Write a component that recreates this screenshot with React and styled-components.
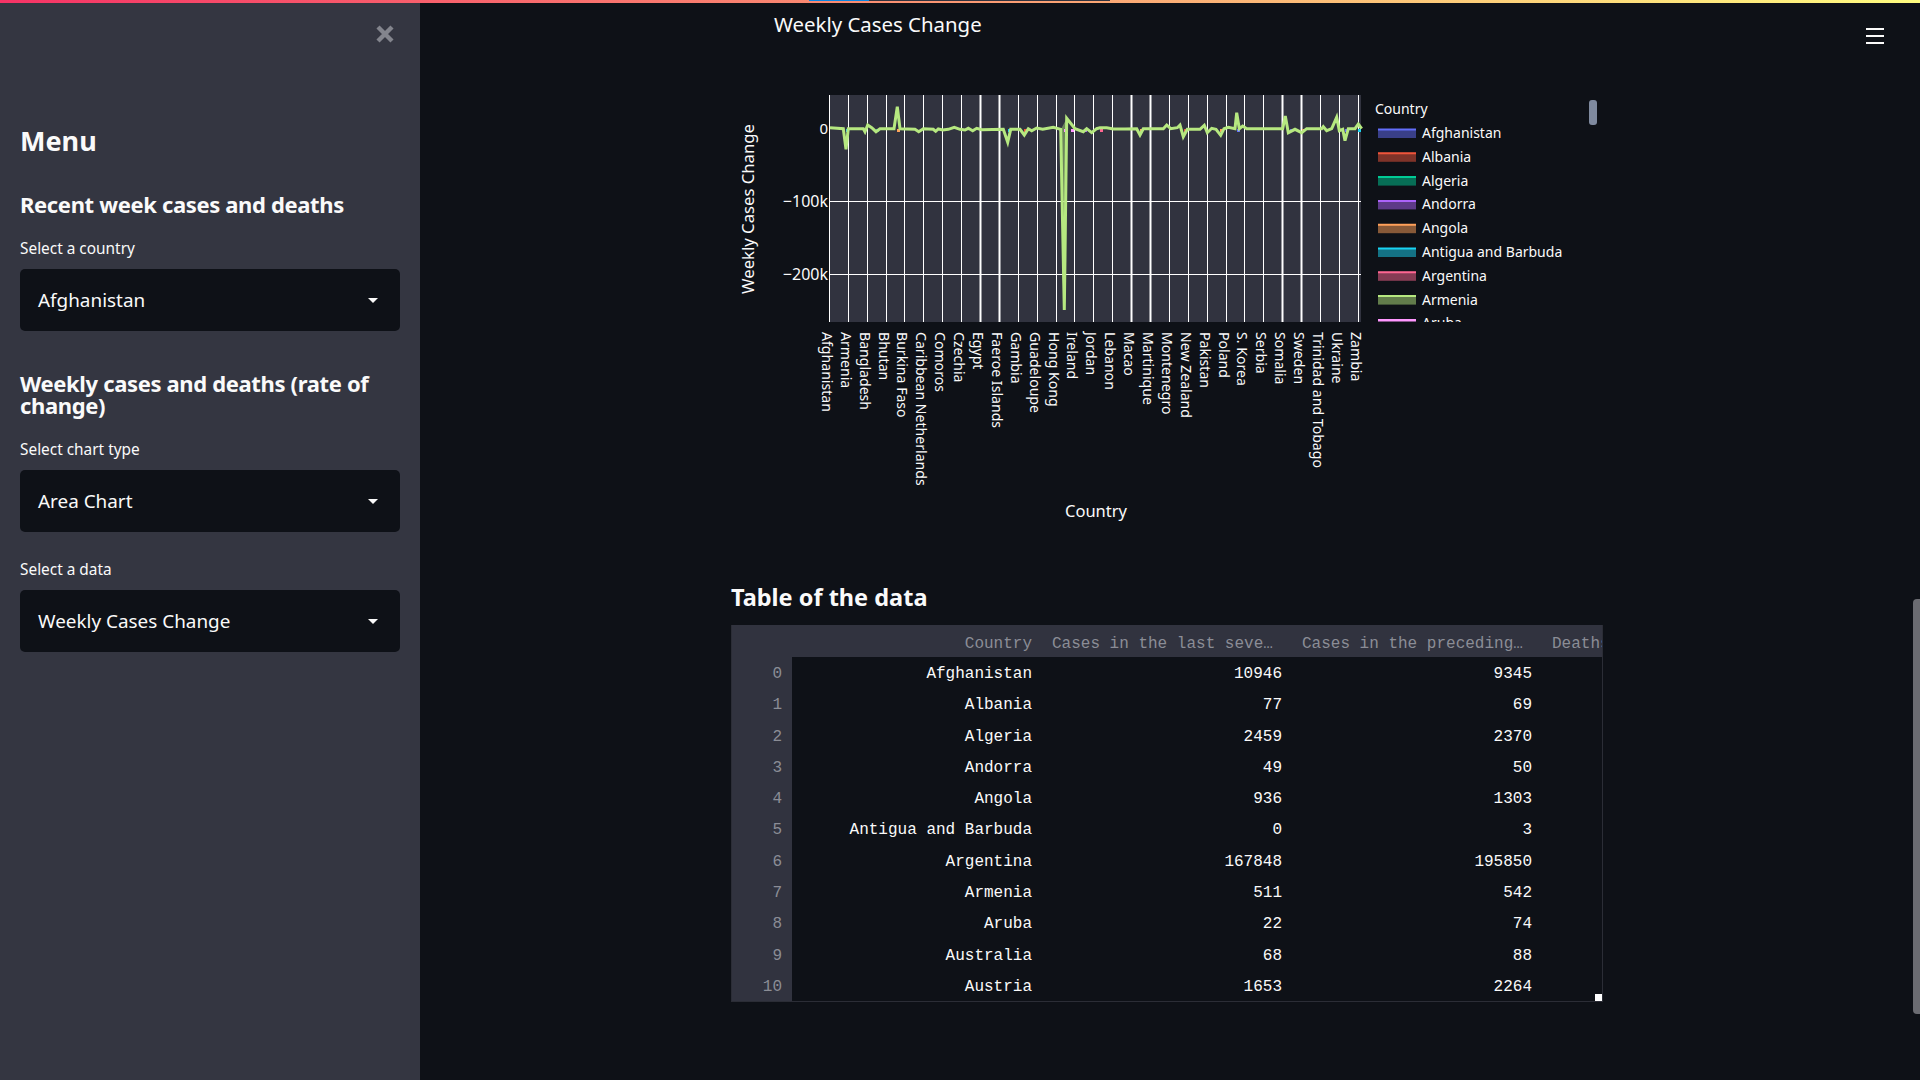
import React from 'react'
import styled, { createGlobalStyle } from 'styled-components'

const sans = '"Noto Sans", "Open Sans", sans-serif'
const mono = '"Liberation Mono", "DejaVu Sans Mono", monospace'

const countries = [
  'Afghanistan', 'Armenia', 'Bangladesh', 'Bhutan', 'Burkina Faso', 'Caribbean Netherlands',
  'Comoros', 'Czechia', 'Egypt', 'Faeroe Islands', 'Gambia', 'Guadeloupe', 'Hong Kong',
  'Ireland', 'Jordan', 'Lebanon', 'Macao', 'Martinique', 'Montenegro', 'New Zealand',
  'Pakistan', 'Poland', 'S. Korea', 'Serbia', 'Somalia', 'Sweden', 'Trinidad and Tobago',
  'Ukraine', 'Zambia',
]

const legend = [
  ['Afghanistan', '#636EFA'],
  ['Albania', '#EF553B'],
  ['Algeria', '#00CC96'],
  ['Andorra', '#AB63FA'],
  ['Angola', '#FFA15A'],
  ['Antigua and Barbuda', '#19D3F3'],
  ['Argentina', '#FF6692'],
  ['Armenia', '#B6E880'],
  ['Aruba', '#FF97FF'],
]

const rows = [
  ['Afghanistan', 10946, 9345],
  ['Albania', 77, 69],
  ['Algeria', 2459, 2370],
  ['Andorra', 49, 50],
  ['Angola', 936, 1303],
  ['Antigua and Barbuda', 0, 3],
  ['Argentina', 167848, 195850],
  ['Armenia', 511, 542],
  ['Aruba', 22, 74],
  ['Australia', 68, 88],
  ['Austria', 1653, 2264],
]

// traced from the plot, left half then right half
const leftTrace = [
  [30, 113], [70, 116], [78, 178], [85, 116], [130, 116], [135, 125], [143, 105], [155, 113],
  [168, 125], [180, 116], [222, 116], [232, 50], [240, 116], [285, 118], [296, 125], [310, 116],
  [340, 118], [347, 124], [355, 117], [368, 120], [385, 118], [403, 112], [420, 118], [435, 120],
  [445, 115], [458, 122], [470, 115], [485, 119], [550, 118], [563, 157], [572, 118], [600, 118],
  [613, 135], [625, 116], [635, 122], [650, 114], [668, 118], [700, 112], [722, 118], [733, 660],
  [740, 85], [765, 116], [790, 125], [800, 116], [815, 128], [830, 116], [840, 113],
].map(([x, y]) => [820 + x / 3, 90 + y / 3])

const rightTrace = [
  [20, 113], [40, 117], [75, 117], [110, 116], [120, 135], [130, 116], [190, 116], [200, 105],
  [212, 116], [232, 113], [240, 105], [250, 140], [262, 118], [300, 118], [313, 106], [322, 128],
  [335, 115], [348, 118], [362, 136], [372, 116], [385, 112], [405, 116], [410, 68], [418, 116],
  [428, 108], [440, 116], [548, 116], [556, 78], [565, 128], [585, 118], [605, 128], [620, 116],
  [665, 116], [670, 110], [680, 122], [695, 116], [710, 82], [718, 122], [728, 118], [735, 152],
  [745, 116], [765, 116], [775, 102], [785, 116],
].map(([x, y]) => [1100 + x / 3, 90 + y / 3])

const trace = [...leftTrace, ...rightTrace].map(([x, y]) => `${x.toFixed(1)},${y.toFixed(1)}`).join(' ')

const specks = [
  [846, '#19D3F3'], [897, '#AB63FA'], [876, '#00CC96'], [897, '#FF6692'], [897, '#FFA15A'],
  [1008, '#19D3F3'], [1024, '#EF553B'], [1064, '#FF97FF'], [1071, '#FF97FF'], [1084, '#AB63FA'],
  [1100, '#FF6692'], [1140, '#FFA15A'], [1184, '#EF553B'], [1220, '#FFA15A'], [1237, '#636EFA'],
  [1290, '#636EFA'], [1302, '#FFA15A'], [1345, '#636EFA'], [1358, '#19D3F3'],
]

const tickX = (i) => 829.4 + i * 18.89
const wideGrid = [8, 9, 16, 17, 24, 25]

const GlobalStyle = createGlobalStyle`
  html, body {
    margin: 0;
    height: 100%;
    background: #0e1117;
    overflow: hidden;
  }
  * {
    box-sizing: border-box;
  }
`

const Page = styled.div`
  position: relative;
  display: grid;
  grid-template-columns: 420px 1fr;
  height: 100vh;
  color: #fafafa;
  font-family: ${sans};
`

const TopBar = styled.div`
  position: absolute;
  top: 0;
  left: 0;
  right: 0;
  height: 3px;
  background: linear-gradient(90deg, #f63366, #fffd80);
`

const BarPiece = styled.span`
  position: absolute;
  top: 0;
  left: ${(p) => p.$left}px;
  width: ${(p) => p.$width}px;
  height: 1px;
  background: ${(p) => p.$color};
`

const Sidebar = styled.aside`
  background: #343641;
  padding: 3px 20px 0;
  display: flex;
  flex-direction: column;
`

const CloseRow = styled.div`
  display: flex;
  justify-content: flex-end;
  padding: 22px 6px 0 0;
  height: 120px;
  color: #83858d;
`

const MenuTitle = styled.h1`
  margin: 0;
  font-size: 27px;
  line-height: 36px;
  font-weight: 700;
`

const SideHeading = styled.h2`
  margin: ${(p) => p.$top}px 0 0;
  font-size: 22px;
  line-height: 22px;
  font-weight: 700;
  letter-spacing: -0.35px;
`

const Field = styled.div`
  margin-top: ${(p) => p.$top}px;
`

const FieldLabel = styled.div`
  font-size: 15.4px;
  line-height: 20px;
  margin-bottom: 10px;
`

const SelectBox = styled.div`
  height: 62px;
  border-radius: 5px;
  background: #0e1117;
  display: flex;
  align-items: center;
  justify-content: space-between;
  padding: 0 22px 0 18px;
  font-size: 18.9px;
`

const Caret = styled.span`
  width: 0;
  height: 0;
  border-left: 5px solid transparent;
  border-right: 5px solid transparent;
  border-top: 5px solid #fafafa;
`

const Main = styled.main`
  padding: 3px 0 0 311px;
  min-width: 0;
`

const ChartFrame = styled.svg`
  display: block;
  width: 872px;
  height: 537px;
  font-family: ${sans};
  fill: #fafafa;
`

const TableHeading = styled.h2`
  margin: 40px 0 0;
  font-size: 23.5px;
  line-height: 34px;
  font-weight: 700;
`

const DataTable = styled.div`
  position: relative;
  width: 872px;
  height: 377px;
  margin-top: 11px;
  border-left: 1px solid #2b2d36;
  border-right: 1px solid #2b2d36;
  border-bottom: 1px solid #2b2d36;
  overflow: hidden;
  font-family: ${mono};
  font-size: 16px;
`

const TableRow = styled.div`
  display: grid;
  grid-template-columns: 60px repeat(4, 250px);
  height: ${(p) => (p.$head ? 32 : 31.27)}px;
  align-items: center;
  background: ${(p) => (p.$head ? '#31333f' : 'transparent')};
`

const IndexCell = styled.div`
  height: 100%;
  display: flex;
  align-items: center;
  justify-content: flex-end;
  padding: 3px 10px 0 0;
  background: #31333f;
  color: #8b8d96;
`

const Cell = styled.div`
  padding: 3px 10px 0;
  text-align: right;
  white-space: nowrap;
  color: #fafafa;
`

const HeadCell = styled.div`
  padding: 5px 10px 0;
  text-align: ${(p) => (p.$left ? 'left' : 'right')};
  white-space: nowrap;
  color: #8b8d96;
`

const ResizeHandle = styled.span`
  position: absolute;
  right: 0;
  bottom: 0;
  width: 7px;
  height: 7px;
  background: #fff;
`

const MenuButton = styled.div`
  position: absolute;
  top: 28px;
  right: 36px;
  width: 18px;
  display: flex;
  flex-direction: column;
  gap: 5px;
`

const MenuBar = styled.span`
  height: 2px;
  background: #fafafa;
`

const PageScroll = styled.span`
  position: absolute;
  right: 0;
  top: 599px;
  width: 7px;
  height: 415px;
  border-radius: 4px 0 0 4px;
  background: #6b6c72;
`

function Chart() {
  return (
    <ChartFrame viewBox="731 3 872 537">
      <text x="774" y="32" fontSize="20.4">Weekly Cases Change</text>

      <rect x="830" y="95" width="531" height="227" fill="#31333f" />
      {countries.map((name, i) => (
        <line
          key={name}
          x1={Math.floor(tickX(i)) + 0.5}
          x2={Math.floor(tickX(i)) + 0.5}
          y1="95"
          y2="322"
          stroke="#fff"
          strokeWidth={wideGrid.includes(i) ? 2 : 1}
        />
      ))}
      {[201.5, 274.5].map((y) => (
        <line key={y} x1="830" x2="1361" y1={y} y2={y} stroke="#fff" />
      ))}

      <polygon points="1061,129 1062.5,278 1064.5,310 1066,290 1067,118" fill="#b6e880" opacity="0.45" />
      {specks.map(([x, color], i) => (
        <rect key={i} x={x} y="129" width="3" height="3" fill={color} />
      ))}
      <polyline points={trace} fill="none" stroke="#b6e880" strokeWidth="3" strokeLinejoin="miter" />

      <text x="828" y="134" fontSize="15" textAnchor="end">0</text>
      <text x="828" y="207" fontSize="16" textAnchor="end">−100k</text>
      <text x="828" y="280" fontSize="16" textAnchor="end">−200k</text>

      {countries.map((name, i) => (
        <text key={name} transform={`translate(${tickX(i) - 7.5} 332) rotate(90)`} fontSize="14.1">
          {name}
        </text>
      ))}

      <text transform="translate(754 209) rotate(-90)" fontSize="16.7" textAnchor="middle">
        Weekly Cases Change
      </text>
      <text x="1096" y="517" fontSize="16.5" textAnchor="middle">Country</text>

      <text x="1375" y="114" fontSize="14">Country</text>
      <clipPath id="legend-clip">
        <rect x="1370" y="95" width="220" height="227" />
      </clipPath>
      <g clipPath="url(#legend-clip)">
        {legend.map(([name, color], i) => {
          const y = 133 + i * 23.8
          return (
            <g key={name}>
              <rect x="1378" y={y - 4} width="38" height="9" fill={color} fillOpacity="0.5" />
              <line x1="1378" x2="1416" y1={y - 3.5} y2={y - 3.5} stroke={color} strokeWidth="2" />
              <text x="1422" y={y + 5} fontSize="14">{name}</text>
            </g>
          )
        })}
      </g>
      <rect x="1589" y="100" width="8" height="25" rx="3" fill="#7f8a9f" />
    </ChartFrame>
  )
}

function App() {
  return (
    <Page>
      <GlobalStyle />
      <Sidebar>
        <CloseRow>
          <svg width="18" height="18" viewBox="0 0 18 18">
            <path d="M2 2 L16 16 M16 2 L2 16" stroke="currentColor" strokeWidth="4.4" fill="none" />
          </svg>
        </CloseRow>
        <MenuTitle>Menu</MenuTitle>
        <SideHeading $top={34}>Recent week cases and deaths</SideHeading>
        <Field $top={24}>
          <FieldLabel>Select a country</FieldLabel>
          <SelectBox>
            Afghanistan
            <Caret />
          </SelectBox>
        </Field>
        <SideHeading $top={41}>Weekly cases and deaths (rate of change)</SideHeading>
        <Field $top={24}>
          <FieldLabel>Select chart type</FieldLabel>
          <SelectBox>
            Area Chart
            <Caret />
          </SelectBox>
        </Field>
        <Field $top={28}>
          <FieldLabel>Select a data</FieldLabel>
          <SelectBox>
            Weekly Cases Change
            <Caret />
          </SelectBox>
        </Field>
      </Sidebar>

      <Main>
        <Chart />
        <TableHeading>Table of the data</TableHeading>
        <DataTable>
          <TableRow $head>
            <span />
            <HeadCell>Country</HeadCell>
            <HeadCell $left>Cases in the last seve…</HeadCell>
            <HeadCell $left>Cases in the preceding…</HeadCell>
            <HeadCell $left>Deaths in the last seven…</HeadCell>
          </TableRow>
          {rows.map((row, i) => (
            <TableRow key={row[0]}>
              <IndexCell>{i}</IndexCell>
              {row.map((value) => (
                <Cell key={value}>{value}</Cell>
              ))}
            </TableRow>
          ))}
          <ResizeHandle />
        </DataTable>
      </Main>

      <TopBar>
        <BarPiece $left={809} $width={60} $color="#0a84e0" />
        <BarPiece $left={869} $width={241} $color="#31333f" />
      </TopBar>
      <MenuButton>
        <MenuBar />
        <MenuBar />
        <MenuBar />
      </MenuButton>
      <PageScroll />
    </Page>
  )
}

export default App
